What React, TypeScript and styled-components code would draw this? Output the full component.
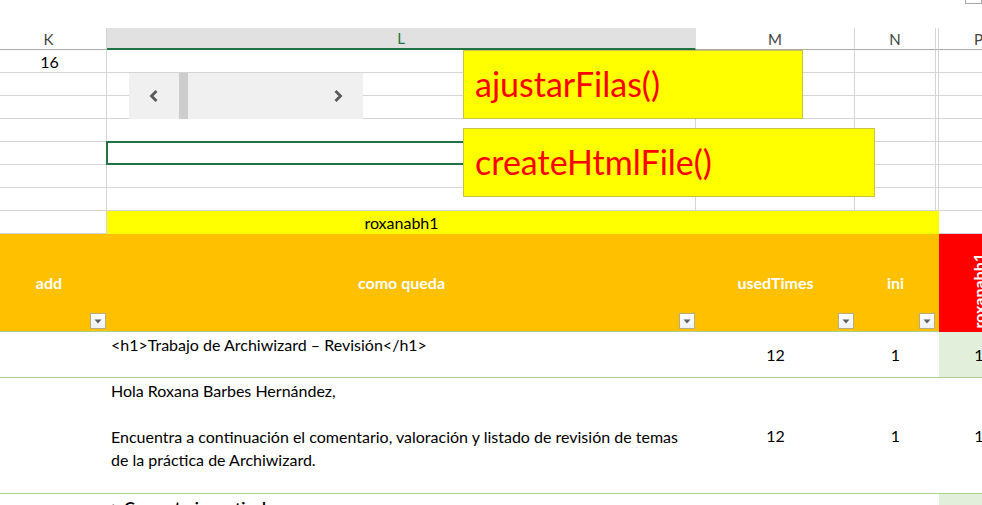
import styled, { createGlobalStyle } from "styled-components";

const GlobalStyle = createGlobalStyle`
    html, body {
        margin: 0;
        padding: 0;
        background: #ffffff;
        overflow: hidden;
    }
    body {
        font-family: Lato, "Open Sans", "Liberation Sans", sans-serif;
        color: #000;
    }
`

const GRID = "#d4d4d4"
const TABLE_LINE = "#a9d08e"

interface DataRow {
    lines: string[],
    used: number,
    ini: number,
    p: number,
    band: boolean,
    height: number,
    bold?: boolean
}

const rows: DataRow[] = [
    { lines: ["<h1>Trabajo de Archiwizard – Revisión</h1>"], used: 12, ini: 1, p: 1, band: true, height: 46 },
    {
        lines: [
            "Hola Roxana Barbes Hernández,",
            "",
            "Encuentra a continuación el comentario, valoración y listado de revisión de temas",
            "de la práctica de Archiwizard."
        ], used: 12, ini: 1, p: 1, band: false, height: 116
    },
    { lines: ["> Comentario particular:"], used: 12, ini: 1, p: 1, band: true, height: 40, bold: true },
]

function FilterButton() {
    return (
        <Filter>
            <svg width="8" height="5" viewBox="0 0 8 5">
                <path d="M0.5 0.5 L7.5 0.5 L4 4.5 Z" fill="#5f5f5f" />
            </svg>
        </Filter>
    )
}

export default function App() {
    const emptyRows = [1, 2, 3, 4, 5, 6]
    return (
        <>
            <GlobalStyle />
            <Page>
                <TopStrip>
                    <RibbonEdge />
                </TopStrip>

                <Sheet>
                    {/* column letters */}
                    <ColHead $first>K</ColHead>
                    <ColHead $selected>L</ColHead>
                    <ColHead>M</ColHead>
                    <ColHead>N</ColHead>
                    <ColHead />
                    <ColHead>P</ColHead>

                    {/* row with 16 */}
                    <Cell $first>16</Cell>
                    <Cell />
                    <Cell />
                    <Cell />
                    <Cell />
                    <Cell />

                    {emptyRows.map((r) => (
                        <>
                            <Cell key={"k" + r} $first />
                            <Cell key={"l" + r} $selected={r === 4} />
                            <Cell key={"m" + r} />
                            <Cell key={"n" + r} />
                            <Cell key={"o" + r} />
                            <Cell key={"p" + r} />
                        </>
                    ))}

                    {/* yellow title row */}
                    <Cell $first />
                    <YellowCell>roxanabh1</YellowCell>
                    <YellowCell />
                    <YellowCell />
                    <YellowCell />
                    <Cell />
                </Sheet>

                <HeaderRow>
                    <HeadCell $first>add<FilterButton /></HeadCell>
                    <HeadCell>como queda<FilterButton /></HeadCell>
                    <HeadCell>usedTimes<FilterButton /></HeadCell>
                    <HeadCell>ini<FilterButton /></HeadCell>
                    <HeadCell />
                    <RedHead><Vertical>roxanabh1</Vertical></RedHead>
                </HeaderRow>

                {rows.map((row, i) => (
                    <DataLine key={i} $height={row.height}>
                        <DataCell />
                        <TextCell $bold={row.bold}>
                            {row.lines.map((line, j) => (
                                <TextLine key={j}>{line === "" ? "\u00a0" : line}</TextLine>
                            ))}
                        </TextCell>
                        <NumCell>{i < 2 ? row.used : ""}</NumCell>
                        <NumCell>{i < 2 ? row.ini : ""}</NumCell>
                        <DataCell />
                        <NumCell $band={row.band}>{i < 2 ? row.p : ""}</NumCell>
                    </DataLine>
                ))}

                <ScrollControl>
                    <Arrow>
                        <svg width="14" height="14" viewBox="0 0 14 14">
                            <path d="M9.5 2 L4.5 7 L9.5 12" stroke="#5a5a5a" strokeWidth="2.8" fill="none" />
                        </svg>
                    </Arrow>
                    <Thumb />
                    <Track />
                    <Arrow>
                        <svg width="14" height="14" viewBox="0 0 14 14">
                            <path d="M4.5 2 L9.5 7 L4.5 12" stroke="#5a5a5a" strokeWidth="2.8" fill="none" />
                        </svg>
                    </Arrow>
                </ScrollControl>

                <MacroButton $top={50} $width={340}>ajustarFilas()</MacroButton>
                <MacroButton $top={128} $width={412}>createHtmlFile()</MacroButton>
            </Page>
        </>
    )
}

const Page = styled.div`
    position: relative;
    width: 982px;
    height: 505px;
    overflow: hidden;
    font-size: 16px;
`
const TopStrip = styled.div`
    height: 28px;
    display: flex;
    justify-content: flex-end;
    align-items: flex-start;
`
const RibbonEdge = styled.div`
    width: 15px;
    height: 3px;
    border: 1px solid #a6a6a6;
    border-top: none;
`
const Sheet = styled.div`
    display: grid;
    grid-template-columns: 107px 589px 159px 81px 3px 80px;
    width: 1019px;
`
const ColHead = styled.div<{ $first?: boolean, $selected?: boolean }>`
    height: 22px;
    box-sizing: border-box;
    display: flex;
    align-items: center;
    justify-content: center;
    padding-right: ${p => p.$first ? "9px" : "0"};
    font-size: 15px;
    color: ${p => p.$selected ? "#217346" : "#444444"};
    background: ${p => p.$selected ? "#e1e1e1" : "#ffffff"};
    border-right: 1px solid ${p => p.$selected ? "#e1e1e1" : GRID};
    border-bottom: ${p => p.$selected ? "2px solid #217346" : "1px solid #ababab"};
`
const Cell = styled.div<{ $first?: boolean, $selected?: boolean }>`
    height: 23px;
    box-sizing: border-box;
    display: flex;
    align-items: center;
    justify-content: center;
    padding-right: ${p => p.$first ? "7px" : "0"};
    font-size: 16px;
    border-right: 1px solid ${GRID};
    border-bottom: 1px solid ${GRID};
    ${p => p.$selected && `
        border: 2px solid #217346;
        margin: -1px 0 0 -1px;
        height: 24px;
        width: calc(100% + 1px);
    `}
`
const YellowCell = styled.div`
    height: 23px;
    display: flex;
    align-items: center;
    justify-content: center;
    background: #ffff00;
    font-size: 16px;
    color: #000;
`
const HeaderRow = styled.div`
    display: grid;
    grid-template-columns: 107px 589px 159px 81px 3px 80px;
    width: 1019px;
    height: 98px;
`
const HeadCell = styled.div<{ $first?: boolean }>`
    position: relative;
    display: flex;
    align-items: center;
    justify-content: center;
    padding-right: ${p => p.$first ? "9px" : "0"};
    background: #ffc000;
    color: #ffffff;
    font-weight: 700;
    font-size: 16px;
    border-bottom: 1px solid ${TABLE_LINE};
`
const Filter = styled.div`
    position: absolute;
    right: 1px;
    bottom: 2px;
    width: 16px;
    height: 16px;
    box-sizing: border-box;
    border: 1px solid #b9aa86;
    background: linear-gradient(#ffffff, #eef0f3);
    display: flex;
    align-items: center;
    justify-content: center;
`
const RedHead = styled.div`
    background: #ff0000;
    display: flex;
    align-items: flex-end;
    justify-content: center;
    padding-bottom: 3px;
    box-sizing: border-box;
`
const Vertical = styled.span`
    writing-mode: vertical-rl;
    transform: rotate(180deg);
    color: #ffffff;
    font-weight: 700;
    font-size: 16px;
    line-height: 1;
`
const DataLine = styled.div<{ $height: number }>`
    display: grid;
    grid-template-columns: 107px 589px 159px 81px 3px 80px;
    width: 1019px;
    height: ${p => p.$height}px;
    border-bottom: 1px solid ${TABLE_LINE};
    box-sizing: border-box;
`
const DataCell = styled.div`
    background: #ffffff;
`
const TextCell = styled.div<{ $bold?: boolean }>`
    padding: 1px 4px 0;
    font-weight: ${p => p.$bold ? 700 : 400};
    display: flex;
    flex-direction: column;
`
const TextLine = styled.div`
    line-height: 23px;
    white-space: nowrap;
`
const NumCell = styled.div<{ $band?: boolean }>`
    display: flex;
    align-items: center;
    justify-content: center;
    background: ${p => p.$band ? "#e2efda" : "#ffffff"};
`
const ScrollControl = styled.div`
    position: absolute;
    left: 129px;
    top: 73px;
    width: 234px;
    height: 46px;
    background: #f0f0f0;
    display: flex;
    align-items: stretch;
`
const Arrow = styled.div`
    width: 50px;
    display: flex;
    align-items: center;
    justify-content: center;
`
const Thumb = styled.div`
    width: 9px;
    background: #cdcdcd;
`
const Track = styled.div`
    flex: 1;
`
const MacroButton = styled.div<{ $top: number, $width: number }>`
    position: absolute;
    left: 463px;
    top: ${p => p.$top}px;
    width: ${p => p.$width}px;
    height: 69px;
    box-sizing: border-box;
    background: #ffff00;
    border: 1px solid #c9c24a;
    display: flex;
    align-items: center;
    padding: 0 0 2px 11px;
    color: #ff0000;
    font-size: 34px;
    font-family: Lato, "Open Sans", sans-serif;
`
